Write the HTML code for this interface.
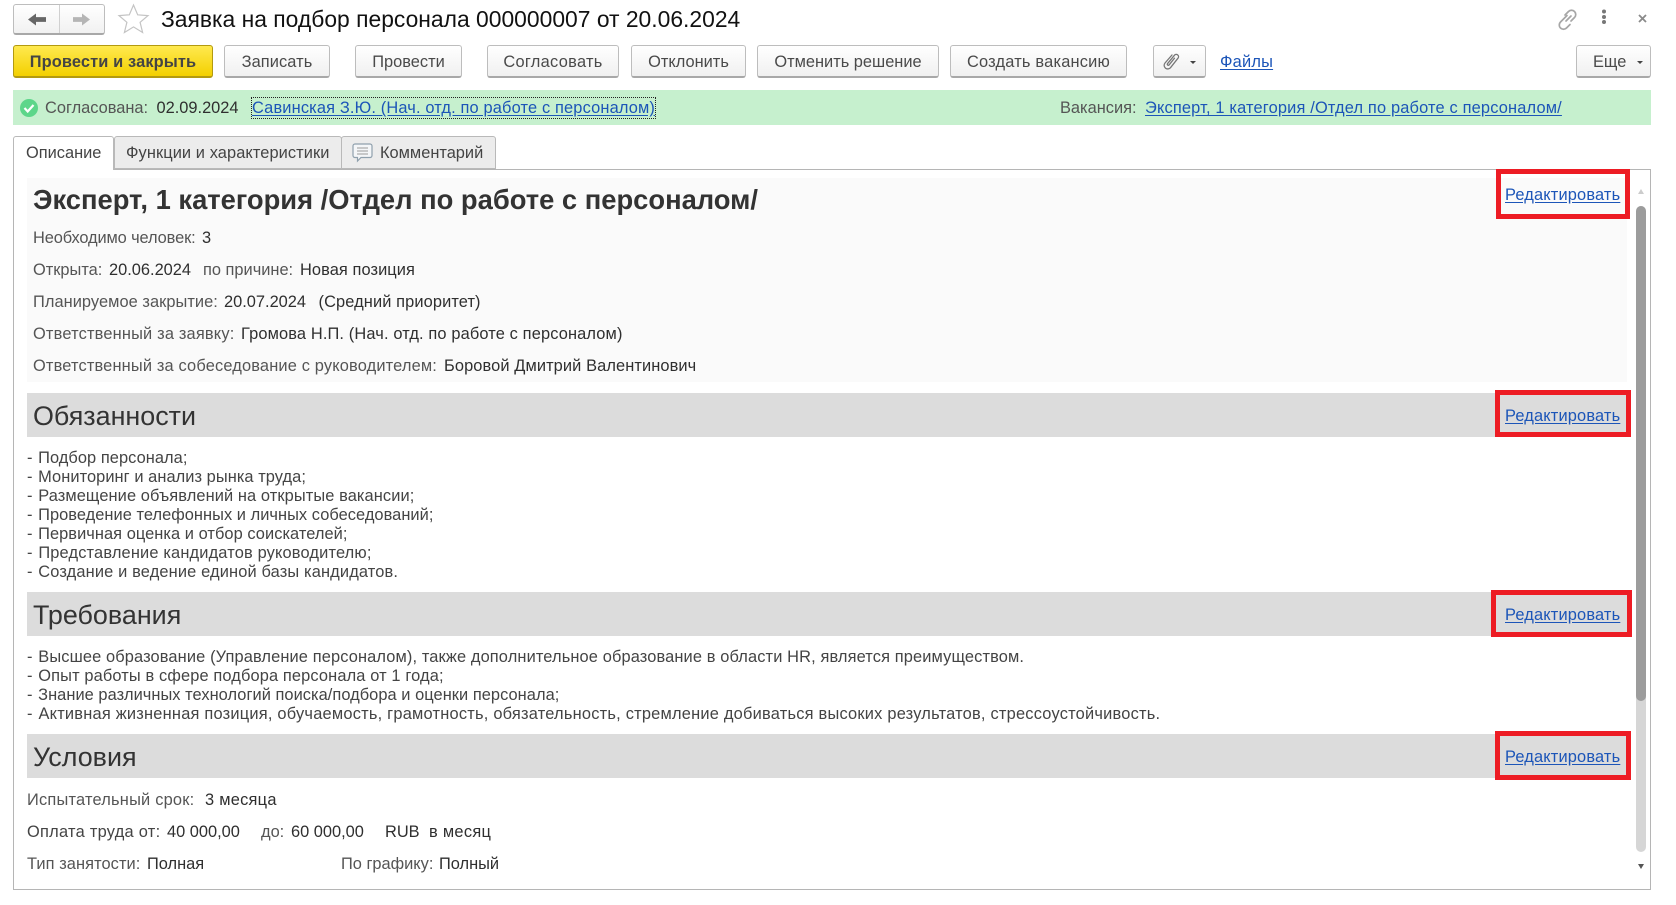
<!DOCTYPE html>
<html lang="ru"><head><meta charset="utf-8"><title>Заявка</title>
<style>
html,body{margin:0;padding:0;background:#fff}
body{width:1676px;height:905px;position:relative;overflow:hidden;font-family:"Liberation Sans",Arial,sans-serif;font-size:16.4px;color:#333}
.b,.t,.a{position:absolute;box-sizing:border-box}
.t{white-space:nowrap;line-height:20px;height:20px}
.l{color:#555}
.v{color:#2f2f2f}
.lk{color:#1c55b8;text-decoration:underline;text-underline-offset:2px}
.btn{position:absolute;top:45px;height:33px;box-sizing:border-box;border:1px solid #bdbdbd;border-bottom:2px solid #a8a8a8;border-radius:3px;background:linear-gradient(#fff,#f0f0f0);display:flex;align-items:center;justify-content:center;color:#4a4a4a;white-space:nowrap;padding-top:3px}
.y{background:linear-gradient(#ffe94f,#f3d000);border-color:#b39a10;font-weight:bold;color:#444}
.bar{position:absolute;left:27px;width:1600px;height:44px;background:#dcdcdc}
.h{position:absolute;left:33px;font-size:26.9px;line-height:46px;color:#333;white-space:nowrap}
.rb{position:absolute;border:5px solid #ed1c24;box-sizing:border-box}
.tab{position:absolute;top:136px;height:33px;box-sizing:border-box;border:1px solid #b9b9b9;border-radius:3px 3px 0 0;background:#ececec}
.list{position:absolute;left:27px;line-height:19.08px;color:#444;white-space:nowrap}
.list div{height:19.08px}
.list div::first-letter{margin-right:1px}
.ed{letter-spacing:.16px}
</style></head><body>

<div class="b" style="left:13px;top:4px;width:92px;height:31px;border:1px solid #bdbdbd;border-bottom:2px solid #a8a8a8;border-radius:3px;background:linear-gradient(#fff,#f1f1f1)"></div>
<div class="b" style="left:59px;top:5px;width:1px;height:28px;background:#d0d0d0"></div>
<svg class="a" style="left:0;top:0" width="1676" height="40" viewBox="0 0 1676 40">
<path d="M28 19.5l8-6v3.6h10v4.8H36v3.600z" fill="#666"/>
<path d="M90 19.5l-8-6v3.6H73v4.8h9v3.600z" fill="#b5b5b5"/>
<path d="M133.500 5l4.200 9.800 10.300.8-7.900 6.700 2.500 10.200-9.100-5.600-9.100 5.600 2.500-10.200-7.900-6.700 10.300-.8z" fill="#fff" stroke="#c4c4c4" stroke-width="1.200"/>
<g fill="none" stroke="#a6a6a6" stroke-width="1.700" stroke-linecap="round">
<path d="M1565 15l3.500-3.500a4.200 4.200 0 0 1 6 6L1571 21"/><path d="M1567 15.500l-6.500 6.500a4.200 4.200 0 0 0 6 6l3.500-3.500"/><path d="M1571 16l-5 5"/>
</g>
<g fill="#777"><circle cx="1604" cy="11.500" r="2"/><circle cx="1604" cy="17" r="2"/><circle cx="1604" cy="22" r="2"/></g>
<path d="M1639 15l7 7M1646 15l-7 7" stroke="#8a8a8a" stroke-width="1.800"/>
</svg>

<div class="t" style="left:161px;top:7px;height:24px;line-height:24px;font-size:22.86px;color:#111">Заявка на подбор персонала 000000007 от 20.06.2024</div>

<div class="btn y" style="left:13px;width:200px;letter-spacing:.12px">Провести и закрыть</div>
<div class="btn" style="left:224px;width:106px;letter-spacing:.1px">Записать</div>
<div class="btn" style="left:355px;width:107px">Провести</div>
<div class="btn" style="left:487px;width:132px;letter-spacing:.29px">Согласовать</div>
<div class="btn" style="left:631px;width:115px">Отклонить</div>
<div class="btn" style="left:757px;width:182px">Отменить решение</div>
<div class="btn" style="left:950px;width:177px;letter-spacing:.2px">Создать вакансию</div>
<div class="btn" style="left:1153px;width:53px"></div>
<div class="t lk" style="left:1220px;top:52px;letter-spacing:.2px">Файлы</div>
<div class="btn" style="left:1576px;width:75px;justify-content:flex-start;padding-left:16px">Еще</div>
<svg class="a" style="left:0;top:40px" width="1676" height="40" viewBox="0 40 1676 40">
<g fill="none" stroke="#777" stroke-width="1.300" stroke-linecap="round"><path d="M1172 55l-7 8a3.600 3.600 0 0 0 5.500 4.700l7.500-9.500a2.300 2.300 0 0 0-3.500-3l-7 8.500a1 1 0 0 0 1.500 1.300l5.500-6.800"/></g>
<path d="M1190 61h6l-3 3z" fill="#444"/><path d="M1637 61h6l-3 3z" fill="#444"/>
</svg>

<div class="b" style="left:13px;top:90px;width:1638px;height:35px;background:#c6f0ce"></div>
<svg class="a" style="left:0;top:90px" width="60" height="35"><circle cx="29" cy="18" r="9" fill="#5dd68a"/><path d="M24.500 18l3.200 3.500 5.800-6.500" fill="none" stroke="#fff" stroke-width="2.200"/></svg>
<div class="t l" style="left:45px;top:98px">Согласована:</div>
<div class="t v" style="left:156.500px;top:98px">02.09.2024</div>
<div class="t lk" style="left:252px;top:98px;outline:1px dotted #222;letter-spacing:.153px">Савинская З.Ю. (Нач. отд. по работе с персоналом)</div>
<div class="t l" style="left:1060px;top:98px">Вакансия:</div>
<div class="t lk" style="left:1145px;top:98px;letter-spacing:.168px">Эксперт, 1 категория /Отдел по работе с персоналом/</div>

<div class="b" style="left:13px;top:169px;width:1638px;height:721px;border:1px solid #b5b5b5"></div>
<div class="tab" style="left:114px;width:228px"></div>
<div class="tab" style="left:341px;width:155px"></div>
<div class="tab" style="left:13px;width:101px;height:34px;background:#fff;border-bottom:0"></div>
<svg class="a" style="left:0;top:0" width="500" height="175"><path d="M353 146a2 2 0 0 1 2-2h15a2 2 0 0 1 2 2v9.500a2 2 0 0 1-2 2h-9l-3.500 3.500v-3.500H355a2 2 0 0 1-2-2z" fill="#f4f6f8" stroke="#8fa0ad" stroke-width="1.200"/><path d="M357 148h11M357 151h11M357 154h11" stroke="#9a9a9a"/></svg>
<div class="t" style="left:26px;top:143px;color:#444">Описание</div>
<div class="t" style="left:126px;top:143px;color:#444;letter-spacing:.085px">Функции и характеристики</div>
<div class="t" style="left:380px;top:143px;color:#444">Комментарий</div>

<div class="b" style="left:27px;top:178px;width:1600px;height:204px;background:#fafafa"></div>
<div class="t" style="left:33px;top:186px;height:28px;line-height:28px;font-size:27.35px;font-weight:bold;color:#333">Эксперт, 1 категория /Отдел по работе с персоналом/</div>

<div class="t l" style="left:33px;top:228px;letter-spacing:-.11px">Необходимо человек:</div><div class="t v" style="left:202px;top:228px">3</div>
<div class="t l" style="left:33px;top:260px">Открыта:</div><div class="t v" style="left:109px;top:260px">20.06.2024</div><div class="t l" style="left:203px;top:260px">по причине:</div><div class="t v" style="left:300px;top:260px;letter-spacing:.08px">Новая позиция</div>
<div class="t l" style="left:33px;top:292px;letter-spacing:.05px">Планируемое закрытие:</div><div class="t v" style="left:224px;top:292px">20.07.2024</div><div class="t v" style="left:318.500px;top:292px;letter-spacing:.11px">(Средний приоритет)</div>
<div class="t l" style="left:33px;top:324px;letter-spacing:.18px">Ответственный за заявку:</div><div class="t v" style="left:241px;top:324px;letter-spacing:.136px">Громова Н.П. (Нач. отд. по работе с персоналом)</div>
<div class="t l" style="left:33px;top:356px;letter-spacing:.16px">Ответственный за собеседование с руководителем:</div><div class="t v" style="left:444px;top:356px;letter-spacing:.1px">Боровой Дмитрий Валентинович</div>

<div class="bar" style="top:393px"></div><div class="h" style="top:393px">Обязанности</div>
<div class="list" style="top:449px">
<div style="letter-spacing:.06px">- Подбор персонала;</div>
<div style="letter-spacing:.065px">- Мониторинг и анализ рынка труда;</div>
<div style="letter-spacing:.098px">- Размещение объявлений на открытые вакансии;</div>
<div style="letter-spacing:.047px">- Проведение телефонных и личных собеседований;</div>
<div style="letter-spacing:.056px">- Первичная оценка и отбор соискателей;</div>
<div style="letter-spacing:.162px">- Представление кандидатов руководителю;</div>
<div style="letter-spacing:.147px">- Создание и ведение единой базы кандидатов.</div>
</div>

<div class="bar" style="top:592px"></div><div class="h" style="top:592px">Требования</div>
<div class="list" style="top:648px">
<div style="letter-spacing:.128px">- Высшее образование (Управление персоналом), также дополнительное образование в области HR, является преимуществом.</div>
<div style="letter-spacing:.13px">- Опыт работы в сфере подбора персонала от 1 года;</div>
<div style="letter-spacing:.051px">- Знание различных технологий поиска/подбора и оценки персонала;</div>
<div style="letter-spacing:.223px">- Активная жизненная позиция, обучаемость, грамотность, обязательность, стремление добиваться высоких результатов, стрессоустойчивость.</div>
</div>

<div class="bar" style="top:734px"></div><div class="h" style="top:734px">Условия</div>
<div class="t l" style="left:27px;top:790px;letter-spacing:.21px">Испытательный срок:</div><div class="t v" style="left:205px;top:790px;letter-spacing:.26px">3 месяца</div>
<div class="t" style="left:27px;top:822px;letter-spacing:.27px;color:#444">Оплата труда от:</div><div class="t v" style="left:167px;top:822px">40 000,00</div><div class="t l" style="left:261px;top:822px">до:</div><div class="t v" style="left:291px;top:822px">60 000,00</div><div class="t v" style="left:385px;top:822px">RUB</div><div class="t v" style="left:429px;top:822px;letter-spacing:.3px">в месяц</div>
<div class="t l" style="left:27px;top:854px;letter-spacing:.08px">Тип занятости:</div><div class="t v" style="left:147px;top:854px">Полная</div><div class="t l" style="left:341px;top:854px">По графику:</div><div class="t v" style="left:439px;top:854px">Полный</div>

<div class="t lk ed" style="left:1505px;top:185px">Редактировать</div>
<div class="t lk ed" style="left:1505px;top:406px">Редактировать</div>
<div class="t lk ed" style="left:1505px;top:605px">Редактировать</div>
<div class="t lk ed" style="left:1505px;top:747px">Редактировать</div>
<div class="rb" style="left:1496px;top:169px;width:134px;height:50px"></div>
<div class="rb" style="left:1495px;top:390px;width:136px;height:47px"></div>
<div class="rb" style="left:1491px;top:590px;width:141px;height:47px"></div>
<div class="rb" style="left:1495px;top:731px;width:136px;height:49px"></div>

<div class="b" style="left:1636px;top:206px;width:10px;height:646px;background:#d6d6d6;border-radius:5px"></div>
<div class="b" style="left:1636px;top:206px;width:10px;height:495px;background:#9c9c9c;border-radius:5px"></div>
<svg class="a" style="left:1630px;top:185px" width="20" height="690"><path d="M11 4l3 5H8z" fill="#ccc"/><path d="M8 679h6l-3 5z" fill="#555"/></svg>
</body></html>
